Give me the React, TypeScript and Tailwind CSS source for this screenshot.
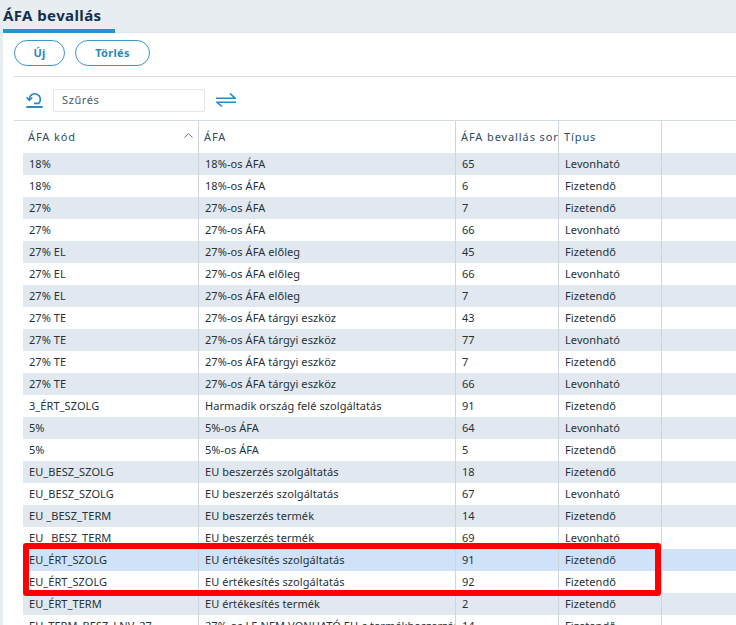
const rows: [string, string, string, string][] = [
  ["18%", "18%-os ÁFA", "65", "Levonható"],
  ["18%", "18%-os ÁFA", "6", "Fizetendő"],
  ["27%", "27%-os ÁFA", "7", "Fizetendő"],
  ["27%", "27%-os ÁFA", "66", "Levonható"],
  ["27% EL", "27%-os ÁFA előleg", "45", "Fizetendő"],
  ["27% EL", "27%-os ÁFA előleg", "66", "Levonható"],
  ["27% EL", "27%-os ÁFA előleg", "7", "Fizetendő"],
  ["27% TE", "27%-os ÁFA tárgyi eszköz", "43", "Fizetendő"],
  ["27% TE", "27%-os ÁFA tárgyi eszköz", "77", "Levonható"],
  ["27% TE", "27%-os ÁFA tárgyi eszköz", "7", "Fizetendő"],
  ["27% TE", "27%-os ÁFA tárgyi eszköz", "66", "Levonható"],
  ["3_ÉRT_SZOLG", "Harmadik ország felé szolgáltatás", "91", "Fizetendő"],
  ["5%", "5%-os ÁFA", "64", "Levonható"],
  ["5%", "5%-os ÁFA", "5", "Fizetendő"],
  ["EU_BESZ_SZOLG", "EU beszerzés szolgáltatás", "18", "Fizetendő"],
  ["EU_BESZ_SZOLG", "EU beszerzés szolgáltatás", "67", "Levonható"],
  ["EU _BESZ_TERM", "EU beszerzés termék", "14", "Fizetendő"],
  ["EU _BESZ_TERM", "EU beszerzés termék", "69", "Levonható"],
  ["EU_ÉRT_SZOLG", "EU értékesítés szolgáltatás", "91", "Fizetendő"],
  ["EU_ÉRT_SZOLG", "EU értékesítés szolgáltatás", "92", "Fizetendő"],
  ["EU_ÉRT_TERM", "EU értékesítés termék", "2", "Fizetendő"],
  ["EU_TERM_BESZ_LNV_27", "27%-os LE NEM VONHATÓ EU-s termékbeszerzés", "14", "Fizetendő"],
];

function HeaderCell({ w, label, sort }: { w: string; label: string; sort?: boolean }) {
  return (
    <div className={`${w} flex h-full shrink-0 items-center overflow-hidden whitespace-nowrap border-r-[1px] border-[#ccd5e0] pl-[5px] tracking-[0.9px] text-[#2f4a66]`}>
      <span className="flex-1">{label}</span>
      {sort && (
        <svg width="9" height="5" viewBox="0 0 9 5" className="mr-[5px] mb-[4px] shrink-0" fill="none" stroke="#7d6a78" strokeWidth="1">
          <path d="M0.5 4.5 L4.5 0.7 L8.5 4.5" />
        </svg>
      )}
    </div>
  );
}

export default function App() {
  return (
    <div className="relative h-[625px] w-[736px] overflow-hidden bg-[#e8edf2] font-['Noto_Sans','Open_Sans',sans-serif] text-[11px] tracking-[0.07px] text-[#263238]">
      <div className="h-[33px] w-full border-b border-[#dfe5ec]">
        <div className="ml-[3px] h-[33px] w-[112px] border-b-[4px] border-[#2a93c9] text-[15px] font-bold leading-[31px] tracking-[0.4px] text-[#12304d]">
          ÁFA bevallás
        </div>
      </div>
      <div className="ml-[3px] h-[592px] bg-white">
        <div className="ml-[11px] flex h-[44px] items-start gap-[10px] border-b border-[#d3dbe5] pt-[7px]">
          <button className="h-[26px] w-[51px] rounded-[13px] border border-[#3a97c9] text-[11px] font-bold tracking-[0.3px] text-[#2a88bb]">Új</button>
          <button className="h-[26px] w-[75px] rounded-[13px] border border-[#3a97c9] text-[11px] font-bold tracking-[0.3px] text-[#2a88bb]">Törlés</button>
        </div>
        <div className="ml-[11px] flex h-[44px] items-center border-b border-[#d3dbe5] pt-[3px]">
          <svg width="17" height="16" viewBox="0 0 17 16" className="ml-[12px] mt-[-1px] shrink-0" fill="none" stroke="#2a88c5" strokeWidth="1.7">
            <path d="M3.2 7.5 A5.6 5.6 0 1 1 12.8 11.3 H8" />
            <path d="M0.6 5.2 L3.2 8.3 L6.2 5.6" />
            <path d="M0.3 15 H16.7" strokeWidth="2" />
          </svg>
          <div className="ml-[10px] flex h-[23px] w-[152px] items-center rounded-[2px] border border-[#e2e7ed] pl-[8px] text-[11px] tracking-[0.6px] text-[#4a5a6a]">
            Szűrés
          </div>
          <svg width="20" height="14" viewBox="0 0 20 14" className="ml-[11px] shrink-0" fill="none" stroke="#2a88c5" strokeWidth="1.6">
            <path d="M0 5.2 H19 L14 0.5" />
            <path d="M20 9.3 H1 L6 13.5" />
          </svg>
        </div>
        <div className="ml-[20px] flex h-[32px] items-center">
          <HeaderCell w="w-[176px]" label="ÁFA kód" sort />
          <HeaderCell w="w-[257px]" label="ÁFA" />
          <HeaderCell w="w-[103px]" label="ÁFA bevallás sorszám" />
          <HeaderCell w="w-[103px]" label="Típus" />
        </div>
        <div className="ml-[20px]">
          {rows.map((r, i) => (
            <div
              key={i}
              className={`flex h-[22px] items-center ${i === 18 ? "bg-[#cfe2f7]" : i % 2 === 0 ? "bg-[#e2e8ef]" : "bg-white"}`}
            >
              <div className="flex h-full w-[176px] shrink-0 items-center overflow-hidden whitespace-nowrap border-r border-[#ccd5e0] pl-[6px]">{r[0]}</div>
              <div className="flex h-full w-[257px] shrink-0 items-center overflow-hidden whitespace-nowrap border-r border-[#ccd5e0] pl-[6px]">{r[1]}</div>
              <div className="flex h-full w-[103px] shrink-0 items-center overflow-hidden whitespace-nowrap border-r border-[#ccd5e0] pl-[6px]">{r[2]}</div>
              <div className="flex h-full w-[103px] shrink-0 items-center overflow-hidden whitespace-nowrap border-r border-[#ccd5e0] pl-[6px]">{r[3]}</div>
            </div>
          ))}
        </div>
      </div>
      <div className="absolute left-[23px] top-[543px] h-[53px] w-[638px] rounded-[3px] border-[6px] border-[#ff0000]" />
    </div>
  );
}
